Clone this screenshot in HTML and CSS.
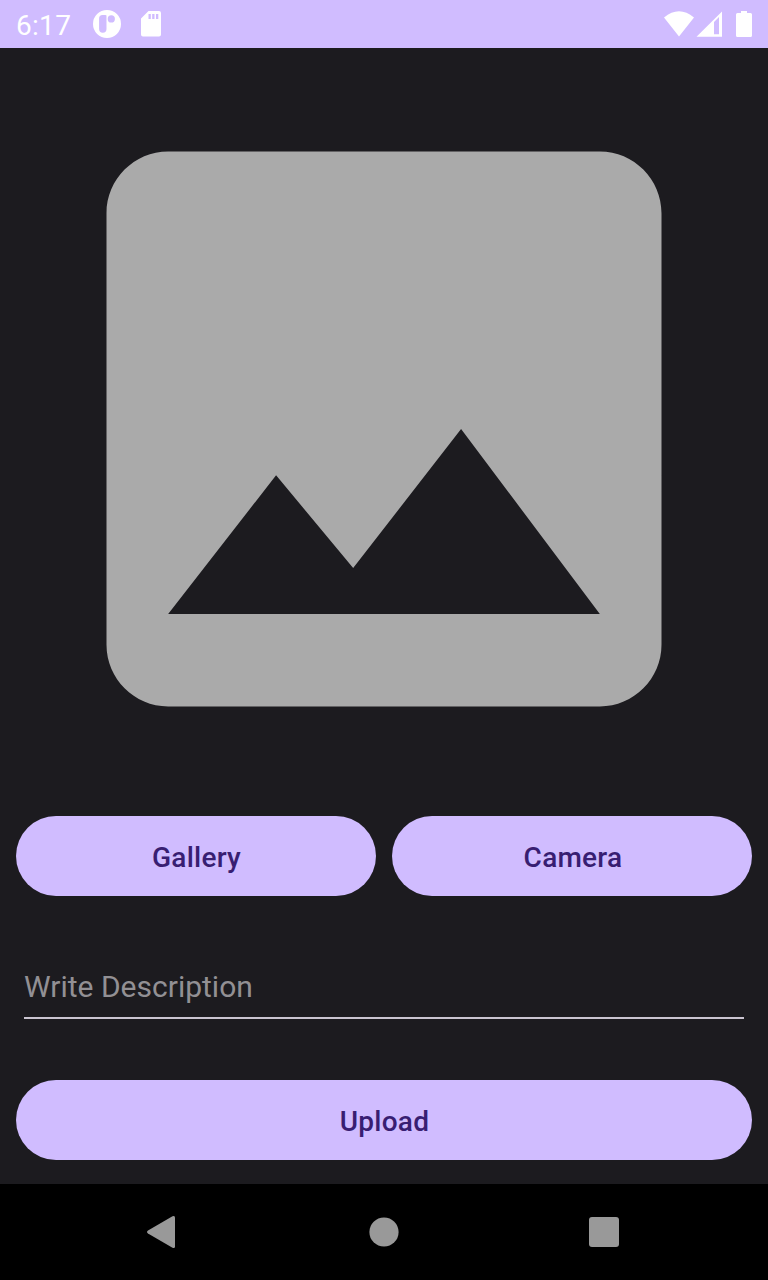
FILE: index.html
```html
<!DOCTYPE html>
<html lang="en">
<head>
<meta charset="utf-8">
<title>Upload</title>
<link rel="stylesheet" href="styles.css">
</head>
<body>
<div class="screen">
  <header class="status">
    <span class="time">6:17</span>
    <svg class="app-icon" width="28" height="28" viewBox="0 0 28 28"><path fill="#fff" fill-rule="evenodd" d="M14 0a14 14 0 1 0 0 28a14 14 0 0 0 0-28zM9.500 5H12.500Q14 5 13.500 6.500V19a3.600 3.600 0 0 1-7.400 0V8.500A3.500 3.500 0 0 1 9.500 5zM18.300 5.300a3.600 3.600 0 1 1 0 7.200a3.600 3.600 0 0 1 0-7.200z"/></svg>
    <svg class="card-icon" width="20" height="26" viewBox="0 0 20 26"><path fill="#fff" fill-rule="evenodd" d="M7.500 0H18a2 2 0 0 1 2 2v21.500a2 2 0 0 1-2 2H2a2 2 0 0 1-2-2V7.500zM7.500 3v5h2.300V3zM11.200 3v5h2.300V3zM15 3v5h2.300V3z"/></svg>
    <svg class="system-icons" width="92" height="28" viewBox="0 0 92 28"><path fill="#fff" d="M4 7.500Q19-5 34 7.500L19 26.500zM81 3V1h6v2h3.500q1.500 0 1.500 1.500v21q0 1.500-1.500 1.500h-13q-1.500 0-1.500-1.500v-21Q76 3 77.500 3z"/><path fill="#fff" fill-rule="evenodd" d="M36.500 26.700L62 1.500v25.200zM54 12v12.300h5V7z"/></svg>
  </header>
  <main class="content">
    <div class="preview">
      <svg width="556" height="556" viewBox="0 0 556 556"><path transform="translate(.5 .5) scale(30.8333)" fill="#aaa" d="M18 16V2c0-1.100-.9-2-2-2H2C.9 0 0 .9 0 2v14c0 1.100.9 2 2 2h14c1.100 0 2-.9 2-2zM5.500 10.500l2.500 3.010L11.500 9l4.500 6H2z"/></svg>
    </div>
    <div class="actions">
      <button class="button">Gallery</button>
      <button class="button camera">Camera</button>
    </div>
    <input class="description" type="text" placeholder="Write Description">
    <button class="button upload">Upload</button>
  </main>
  <nav class="navbar">
    <svg width="32" height="34" viewBox="0 0 32 34"><path fill="#999" d="M27.500 1.300Q30 0 30 2.800V31.200Q30 34 27.500 32.700L3 18.500Q1 17 3 15.500z"/></svg>
    <svg width="32" height="32" viewBox="0 0 32 32"><circle cx="16" cy="16" r="14.600" fill="#999"/></svg>
    <svg width="32" height="32" viewBox="0 0 32 32"><rect x="1" y="1" width="30" height="30" rx="3" fill="#999"/></svg>
  </nav>
</div>
</body>
</html>
```
FILE: styles.css
```css
* { box-sizing: border-box; }
body { margin: 0; font-family: Roboto, sans-serif; background: #1c1b1f; }
.screen { width: 768px; height: 1280px; display: flex; flex-direction: column; background: #1c1b1f; }
.status { height: 48px; display: flex; align-items: center; background: #d0bcff; color: #fff; padding: 0 16px; }
.time { width: 77px; font-size: 28px; line-height: 46px; padding-top: 4px; letter-spacing: .3px; }
.card-icon { margin-left: 20px; }
.system-icons { margin-left: auto; }
.content { flex: 1; display: flex; flex-direction: column; padding: 0 16px; }
.preview { height: 768px; display: flex; justify-content: center; padding-top: 103px; }
.actions { display: grid; grid-template-columns: 1fr 1fr; gap: 16px; }
.button { height: 80px; border: 0; border-radius: 40px; background: #d0bcff; color: #381e72; font: 500 28px Roboto, sans-serif; letter-spacing: .25px; padding: 3px 0 0 1px; }
.camera { padding-left: 2px; }
.description { height: 64px; margin: 59px 8px 0; padding: 0; border: 0; border-bottom: 2px solid #cac4d0; background: transparent; color: #fff; font: 400 30px Roboto, sans-serif; outline: 0; }
.description::placeholder { color: #929094; opacity: 1; }
.upload { margin-top: 61px; }
.navbar { height: 96px; display: grid; grid-template-columns: 32px 32px 32px; align-items: center; justify-content: space-between; padding: 0 148px 0 145px; background: #000; }
.navbar svg:nth-child(2) { margin-left: 1.5px; }
```
